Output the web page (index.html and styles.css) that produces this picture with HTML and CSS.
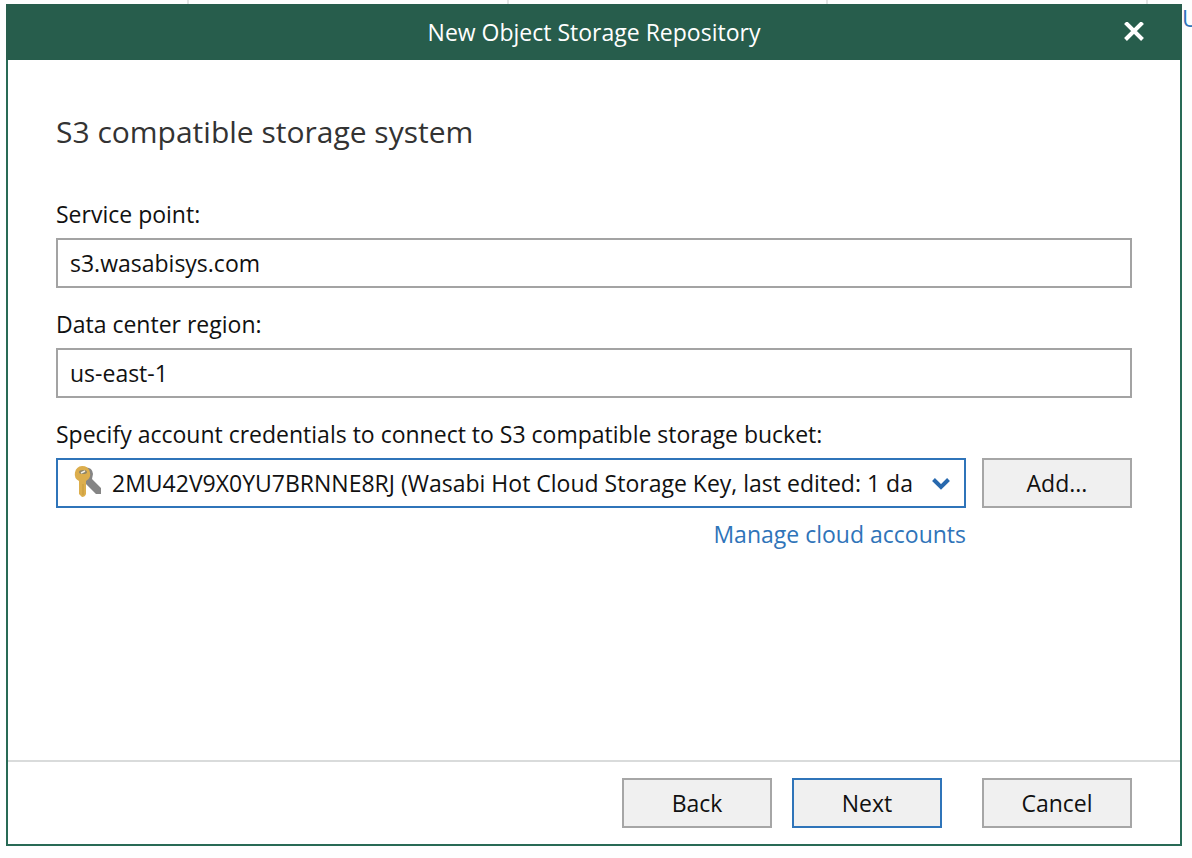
FILE: index.html
```html
<!DOCTYPE html>
<html lang="en">
<head>
<meta charset="utf-8">
<meta name="viewport" content="width=device-width, initial-scale=1">
<title>New Object Storage Repository</title>
<link rel="stylesheet" href="styles.css">
</head>
<body class="page">
  <div class="columns"><span class="col col-first"></span><span class="col"></span><span class="col"></span><span class="col"></span><span class="col col-last"></span></div>
  <a class="page-link" href="#">U</a>
  <form class="dialog">
    <header class="titlebar">
      <span class="title">New Object Storage Repository</span>
      <button class="close" type="button" aria-label="Close">
        <svg width="20" height="20" viewBox="0 0 20 20" aria-hidden="true"><path d="M1.5 .5 18.5 17.5M18.5 .5 1.5 17.5" fill="none" stroke="currentColor" stroke-width="4"/></svg>
      </button>
    </header>
    <main class="content">
      <h1 class="heading">S3 compatible storage system</h1>
      <div class="field">
        <label class="label" for="service">Service point:</label>
        <input class="input" id="service" type="text" value="s3.wasabisys.com">
      </div>
      <div class="field">
        <label class="label" for="region">Data center region:</label>
        <input class="input" id="region" type="text" value="us-east-1">
      </div>
      <div class="field">
        <label class="label" for="account">Specify account credentials to connect to S3 compatible storage bucket:</label>
        <div class="account-row">
          <div class="picker">
            <select class="input select" id="account">
              <option>2MU42V9X0YU7BRNNE8RJ (Wasabi Hot Cloud Storage Key, last edited: 1 da</option>
            </select>
            <svg class="key" width="30" height="34" viewBox="0 0 30 34" aria-hidden="true">
              <path d="M10 3Q19 1 20 9L19 14 28 23V29H23L12 18Z" fill="#858585"/>
              <path d="M9 1A8 8 0 0 1 13 16V29Q12 32 9 32L6 29V16A8 8 0 0 1 9 1Z" fill="#dcae4d"/>
              <ellipse cx="10" cy="7" rx="4" ry="2" fill="#8f8568"/>
              <path d="M8 8 12 6" stroke="#f4f0e4" stroke-width="1.5"/>
              <path d="M10 19V30" stroke="#c69a3d" stroke-width="1"/>
            </svg>
            <svg class="chevron" width="18" height="12" viewBox="0 0 18 12" aria-hidden="true"><path d="M1.5 1.5 9 9 16.5 1.5" fill="none" stroke="currentColor" stroke-width="4"/></svg>
          </div>
          <button class="button" type="button">Add...</button>
          <a class="manage" href="#">Manage cloud accounts</a>
        </div>
      </div>
    </main>
    <footer class="footer">
      <button class="button" type="button">Back</button>
      <button class="button button-primary" type="button">Next</button>
      <button class="button button-cancel" type="button">Cancel</button>
    </footer>
  </form>
</body>
</html>
```

FILE: styles.css
```css
* {
  box-sizing: border-box;
}

.page {
  position: relative;
  display: flex;
  flex-direction: column;
  min-height: 100vh;
  margin: 0;
  padding: 0 10px 12px 6px;
  overflow: hidden;
  background: #fefefe;
  color: #111;
  font: 23px/28px "Open Sans", "Noto Sans", sans-serif;
}

.columns {
  display: flex;
  height: 4px;
}

.col {
  flex: 320 1 0;
  border-right: 2px solid #e4e4e4;
}

.col-first {
  flex-grow: 182;
}

.col-last {
  flex-grow: 34;
  border: 0;
}

.page-link {
  position: absolute;
  top: 4px;
  left: calc(100% - 10px);
  color: #2f74b9;
  text-decoration: none;
}

.dialog {
  display: flex;
  flex: 1;
  flex-direction: column;
  border: 2px solid #286a55;
  background: #fff;
}

.titlebar {
  display: grid;
  grid-template-columns: 1fr auto 1fr;
  align-items: center;
  height: 56px;
  margin: -2px -2px 0;
  padding: 0 38px;
  background: #275d4c;
  color: #fff;
}

.title {
  grid-column: 2;
}

.close {
  display: flex;
  justify-self: end;
  padding: 0;
  border: 0;
  background: none;
  color: inherit;
}

.content {
  flex: 1;
  padding: 52px 48px;
}

.heading {
  margin: 0 0 48px;
  color: #333;
  font-size: 30px;
  font-weight: 400;
  line-height: 40px;
}

.field {
  display: flex;
  flex-direction: column;
  gap: 10px;
  margin-bottom: 22px;
}

.input {
  width: 100%;
  height: 50px;
  padding: 0 12px;
  border: 2px solid #a3a3a3;
  border-radius: 0;
  background: #fff;
  color: inherit;
  font: inherit;
}

.account-row {
  display: grid;
  grid-template-columns: 1fr 150px;
  gap: 12px 16px;
}

.picker {
  position: relative;
}

.select {
  padding: 0 48px 0 54px;
  border-color: #2f74b9;
  line-height: 44px;
  appearance: none;
}

.key,
.chevron {
  position: absolute;
  pointer-events: none;
}

.key {
  top: 7px;
  left: 17px;
}

.chevron {
  top: 20px;
  right: 16px;
  color: #2869ae;
}

.manage {
  justify-self: end;
  color: #2f74b9;
  text-decoration: none;
}

.button {
  width: 150px;
  height: 50px;
  padding: 0;
  border: 2px solid #a6a6a6;
  background: #f0f0f0;
  color: inherit;
  font: inherit;
}

.button-primary {
  border-color: #2f74b9;
}

.footer {
  display: flex;
  justify-content: flex-end;
  gap: 20px;
  padding: 16px 48px;
  border-top: 2px solid #d9dbdb;
}

.button-cancel {
  margin-left: 20px;
}
```
